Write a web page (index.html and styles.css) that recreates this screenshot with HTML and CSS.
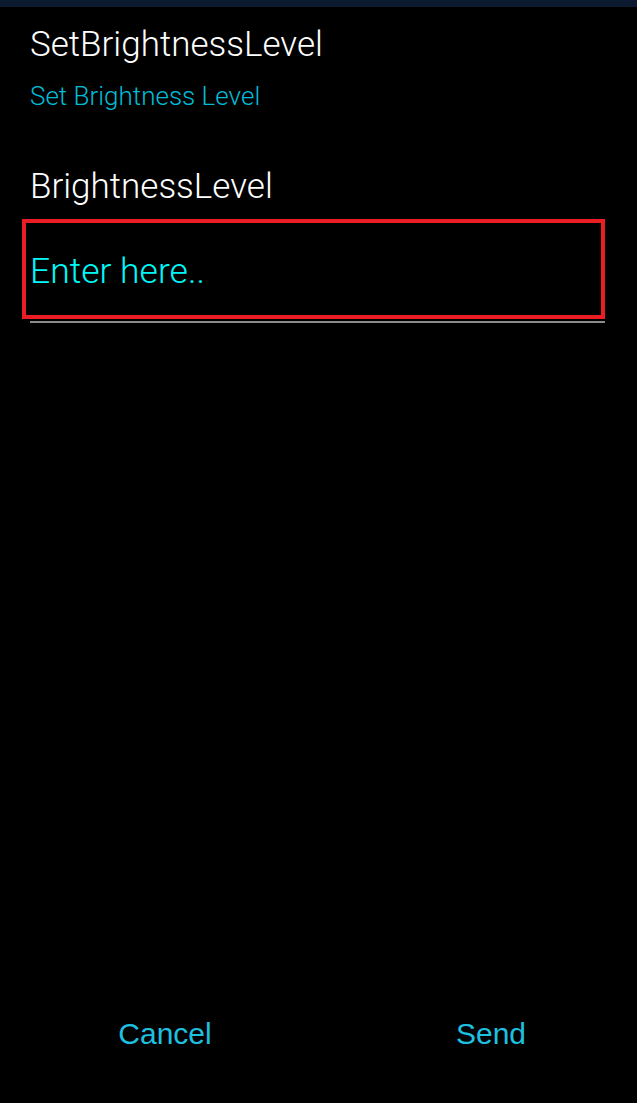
FILE: index.html
```html
<!DOCTYPE html>
<html>
<head>
<meta charset="utf-8">
<link rel="stylesheet" href="styles.css">
</head>
<body>
<div class="screen">
  <div class="topbar"></div>
  <div class="content">
    <div class="title">SetBrightnessLevel</div>
    <div class="subtitle">Set Brightness Level</div>
    <div class="label">BrightnessLevel</div>
    <div class="field">
      <div class="input">Enter here..</div>
    </div>
    <div class="underline"></div>
  </div>
  <div class="footer">
    <div class="btn">Cancel</div>
    <div class="btn">Send</div>
  </div>
</div>
</body>
</html>
```
FILE: styles.css
```css
html, body {
  margin: 0;
  padding: 0;
  background: #000;
  overflow: hidden;
}
.screen {
  width: 637px;
  height: 1103px;
  display: flex;
  flex-direction: column;
  font-family: Roboto, "Liberation Sans", sans-serif;
}
.topbar {
  height: 7px;
  background: #0b1a2e;
}
.content {
  flex: 1;
  padding: 0 32px 0 30px;
}
.title {
  color: #fff;
  font-size: 35px;
  font-weight: 300;
  line-height: 40px;
  margin-top: 18px;
}
.subtitle {
  color: #00bcd8;
  font-size: 26px;
  font-weight: 300;
  line-height: 30px;
  margin-top: 16px;
}
.label {
  color: #fff;
  font-size: 35px;
  font-weight: 300;
  line-height: 40px;
  margin-top: 56px;
}
.field {
  margin: 12px 0 0 -8px;
  height: 92px;
  border: 4px solid #ec1c24;
  display: flex;
  align-items: center;
  padding-left: 4px;
}
.input {
  color: #00f8f8;
  font-size: 35.5px;
  font-weight: 300;
  line-height: 40px;
  margin-top: 4px;
}
.underline {
  height: 2px;
  background: #8a8a8a;
  margin-top: 2px;
}
.footer {
  display: grid;
  grid-template-columns: 326px 326px;
  padding-left: 2px;
  height: 96px;
}
.btn {
  text-align: center;
  color: #1ec0e0;
  font-family: "Liberation Sans", Arial, sans-serif;
  font-size: 30px;
  line-height: 34px;
  padding-top: 10px;
}
```
